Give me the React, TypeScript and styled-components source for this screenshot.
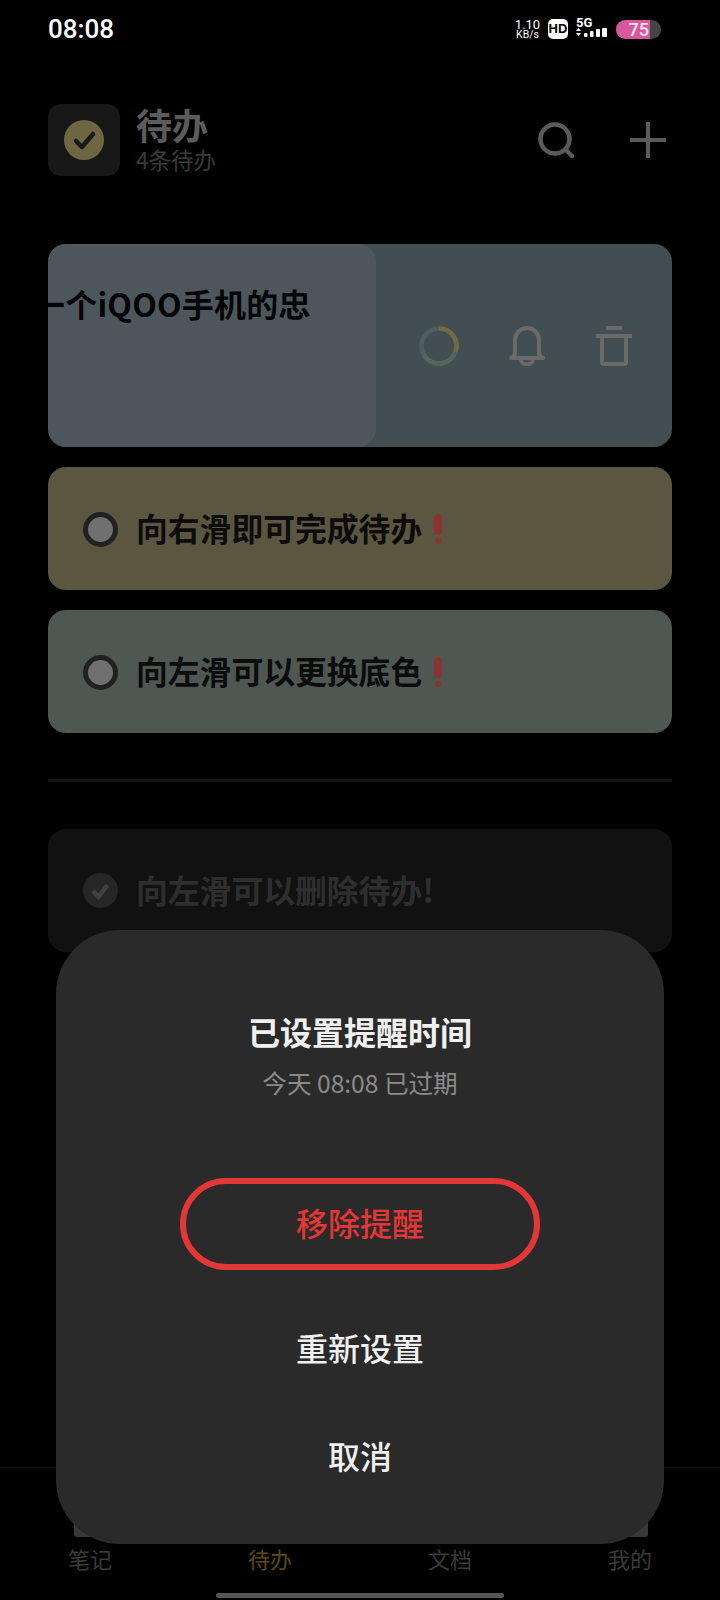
import React from 'react';
import styled, { createGlobalStyle } from 'styled-components';

const FONT = `"Noto Sans CJK SC", "Noto Sans", sans-serif`;

const GlobalStyle = createGlobalStyle`
  html, body {
    margin: 0;
    padding: 0;
    background: #000;
  }
  * {
    box-sizing: border-box;
  }
`;

const Page = styled.div`
  position: relative;
  width: 720px;
  height: 1600px;
  overflow: hidden;
  background: #000;
  font-family: ${FONT};
  display: flex;
  flex-direction: column;
`;

const StatusBar = styled.div`
  height: 58px;
  padding: 0 59px 0 48px;
  display: flex;
  align-items: center;
  justify-content: space-between;
`;

const Time = styled.span`
  font-family: Roboto, sans-serif;
  font-size: 26px;
  font-weight: 500;
  color: #fff;
`;

const StatusIcons = styled.div`
  display: flex;
  align-items: center;
`;

const NetSpeed = styled.div`
  width: 25px;
  margin-right: 8px;
  display: flex;
  flex-direction: column;
  align-items: center;
  font-family: Roboto, sans-serif;
  color: #fff;
`;

const SpeedValue = styled.span`
  font-size: 13px;
  line-height: 11px;
`;

const SpeedUnit = styled.span`
  font-size: 10.5px;
  line-height: 9px;
  white-space: nowrap;
`;

const HdBadge = styled.span`
  width: 20px;
  height: 20px;
  margin-right: 8px;
  border-radius: 5px;
  background: #fff;
  color: #000;
  font-family: "Liberation Sans", sans-serif;
  font-weight: 700;
  font-size: 13px;
  line-height: 20px;
  text-align: center;
`;

const Signal = styled.div`
  width: 32px;
  height: 24px;
  margin-right: 8px;
  position: relative;
`;

const SignalText = styled.span`
  position: absolute;
  left: 0;
  top: 0;
  font-family: Roboto, sans-serif;
  font-weight: 700;
  font-size: 13px;
  line-height: 12px;
  color: #fff;
`;

const Battery = styled.div`
  width: 45px;
  height: 19px;
  border-radius: 10px;
  overflow: hidden;
  background: #444;
  display: flex;
`;

const BatteryLevel = styled.div`
  width: 34px;
  background: #d9579b;
  color: #f4e4ee;
  font-family: Roboto, sans-serif;
  font-weight: 500;
  font-size: 18px;
  line-height: 19px;
  text-align: right;
  padding-right: 1px;
`;

const Header = styled.header`
  margin-top: 46px;
  height: 72px;
  padding: 0 54px 0 48px;
  display: flex;
  align-items: center;
`;

const AppIcon = styled.div`
  width: 72px;
  height: 72px;
  border-radius: 13px;
  background: #181818;
  display: flex;
  align-items: center;
  justify-content: center;
`;

const HeaderText = styled.div`
  margin-left: 16px;
  padding-bottom: 6px;
  flex: 1;
  display: flex;
  flex-direction: column;
`;

const Title = styled.h1`
  margin: 0;
  font-size: 36px;
  line-height: 44px;
  font-weight: 700;
  color: #5c5c5c;
`;

const SubTitle = styled.span`
  font-size: 22.5px;
  line-height: 26px;
  color: #3b3b3b;
`;

const HeaderActions = styled.div`
  display: flex;
  gap: 56px;
`;

const List = styled.div`
  margin-top: 68px;
  padding: 0 48px;
  display: flex;
  flex-direction: column;
`;

const SwipeRow = styled.div`
  height: 203px;
  margin-bottom: 20px;
  border-radius: 18px;
  background: #434e52;
  display: flex;
  align-items: center;
  overflow: hidden;
`;

const SwipeFront = styled.div`
  width: 328px;
  height: 100%;
  flex-shrink: 0;
  border-radius: 18px;
  background: #4d565c;
  overflow: hidden;
  padding-top: 36px;
`;

const SwipeText = styled.div`
  margin-left: -15px;
  font-size: 32px;
  line-height: 46px;
  font-weight: 700;
  letter-spacing: 0.2px;
  color: #050505;
  white-space: nowrap;
`;

const SwipeActions = styled.div`
  flex: 1;
  height: 100%;
  display: flex;
  align-items: center;
  padding: 0 40px 0 43px;
  justify-content: space-between;
`;

const TodoCard = styled.div<{ $bg: string }>`
  height: 123px;
  margin-bottom: 20px;
  padding-left: 35px;
  border-radius: 18px;
  background: ${props => props.$bg};
  display: flex;
  align-items: center;
`;

const Radio = styled.span`
  width: 35px;
  height: 35px;
  margin-top: 2px;
  border-radius: 50%;
  border: 5px solid #212121;
  background: #707070;
`;

const TodoText = styled.span<{ $done?: boolean }>`
  margin-left: 18px;
  padding-bottom: 4px;
  font-size: 31.8px;
  line-height: 44px;
  font-weight: 700;
  color: ${props => (props.$done ? '#2e2e2e' : '#0c0c0c')};
`;

const Mark = styled.span`
  position: relative;
  margin-left: 12px;
  width: 8px;
  height: 30px;
`;

const MarkStem = styled.span`
  position: absolute;
  top: 0;
  left: 0;
  width: 8px;
  height: 21px;
  border-radius: 4px 4px 3px 3px;
  background: #8a3434;
`;

const MarkDot = styled.span`
  position: absolute;
  bottom: 0;
  left: 1px;
  width: 6px;
  height: 6px;
  border-radius: 50%;
  background: #8a3434;
`;

const Divider = styled.div`
  height: 3px;
  margin: 26px 0 47px;
  background: #141414;
`;

const DoneCard = styled(TodoCard)`
  margin-bottom: 0;
`;

const TabBar = styled.nav`
  position: absolute;
  left: 0;
  right: 0;
  bottom: 0;
  height: 133px;
  border-top: 1px solid #111;
  display: grid;
  grid-template-columns: repeat(4, 180px);
  padding-top: 74px;
`;

const TabItem = styled.div<{ $active?: boolean }>`
  text-align: center;
  font-size: 22px;
  line-height: 32px;
  color: ${props => (props.$active ? '#5c4a10' : '#3a3a3a')};
`;

const HomeBar = styled.div`
  position: absolute;
  left: 216px;
  bottom: 2px;
  width: 288px;
  height: 5px;
  border-radius: 3px;
  background: #555;
`;

const TabPeek = styled.span<{ $side: 'left' | 'right' }>`
  position: absolute;
  top: 1520px;
  left: ${props => (props.$side === 'left' ? '74px' : '600px')};
  width: 48px;
  height: 17px;
  border-radius: 3px;
  background: #383838;
`;

const Sheet = styled.div`
  position: absolute;
  left: 56px;
  top: 930px;
  width: 608px;
  height: 614px;
  border-radius: 64px;
  background: #2a2a2a;
  display: flex;
  flex-direction: column;
  align-items: center;
  padding-top: 76px;
`;

const SheetTitle = styled.div`
  font-size: 32px;
  line-height: 50px;
  font-weight: 700;
  color: #f0f0f0;
`;

const SheetSub = styled.div`
  margin-top: 3px;
  font-size: 24.6px;
  line-height: 46px;
  color: #8a8a8a;
`;

const SheetActions = styled.div`
  margin-top: 73px;
  display: flex;
  flex-direction: column;
  align-items: center;
`;

const SheetButton = styled.button<{ $danger?: boolean }>`
  width: 360px;
  height: ${props => (props.$danger ? '92px' : '108px')};
  margin-bottom: ${props => (props.$danger ? '25px' : '0')};
  border-radius: 46px;
  border: ${props => (props.$danger ? '6px solid #e33636' : 'none')};
  background: transparent;
  color: ${props => (props.$danger ? '#e33636' : '#f0f0f0')};
  font-family: inherit;
  font-size: 32px;
  font-weight: 500;
  padding: 0 0 5px;
`;

const BellSvg = styled.svg`
  margin-left: -2px;
`;

const CheckLogo = () => (
  <svg width="40" height="40" viewBox="0 0 40 40">
    <circle cx="20" cy="20" r="20" fill="#6e6640" />
    <path d="M12 21l6 6 11-13" fill="none" stroke="#181818" strokeWidth="4.5" strokeLinecap="round" strokeLinejoin="round" />
  </svg>
);

const SearchIcon = () => (
  <svg width="36" height="36" viewBox="0 0 36 36">
    <circle cx="17" cy="17" r="14.5" fill="none" stroke="#5a5a5a" strokeWidth="4.5" />
    <path d="M28 28l6 6" stroke="#5a5a5a" strokeWidth="4.5" strokeLinecap="round" />
  </svg>
);

const PlusIcon = () => (
  <svg width="36" height="36" viewBox="0 0 36 36">
    <path d="M18 0v36M0 18h36" stroke="#5a5a5a" strokeWidth="4" />
  </svg>
);

const ColorRing = () => (
  <svg width="40" height="40" viewBox="0 0 40 40" fill="none" strokeWidth="4.5">
    <circle cx="20" cy="20" r="17.5" stroke="#4f5d64" />
    <path d="M20 2.5A17.5 17.5 0 0 1 36.5 26" stroke="#6f6b45" />
    <path d="M35.5 28A17.5 17.5 0 0 1 5 29" stroke="#55675a" />
  </svg>
);

const BellIcon = () => (
  <BellSvg width="36" height="40" viewBox="0 0 36 40" fill="none" stroke="#6a6a6a" strokeWidth="4" strokeLinejoin="round" strokeLinecap="round">
    <path d="M2 32c3-1 4-3 4-6V14a12 12 0 0 1 24 0v12c0 3 1 5 4 6z" />
    <path d="M12 33a6 5.5 0 0 0 12 0" />
  </BellSvg>
);

const TrashIcon = () => (
  <svg width="36" height="40" viewBox="0 0 36 40" fill="none" stroke="#6a6a6a" strokeWidth="4">
    <path d="M10 2h16M0 10h36" />
    <path d="M6 10v26a2 2 0 0 0 2 2h20a2 2 0 0 0 2-2V10" />
  </svg>
);

const DoneIcon = () => (
  <svg width="35" height="35" viewBox="0 0 35 35">
    <circle cx="17.5" cy="17.5" r="17.5" fill="#262626" />
    <path d="M10 18l5.5 6 9-12" fill="none" stroke="#404040" strokeWidth="4.5" />
  </svg>
);

const SignalIcon = () => (
  <svg width="32" height="24" viewBox="0 0 32 24" fill="#fff">
    <path d="M0 14l2.5-3 2.5 3zM0 16h5l-2.5 3z" />
    <rect x="8" y="16" width="3.5" height="4" rx="1" />
    <rect x="14" y="14" width="3.5" height="6" rx="1" />
    <rect x="20" y="12" width="4" height="8" rx="1" />
    <rect x="26" y="11" width="5" height="9" rx="1" />
  </svg>
);

const Exclaim = () => (
  <Mark>
    <MarkStem />
    <MarkDot />
  </Mark>
);

const App = () => {
  const tabs = ['笔记', '待办', '文档', '我的'];

  return (
    <Page>
      <GlobalStyle />
      <StatusBar>
        <Time>08:08</Time>
        <StatusIcons>
          <NetSpeed>
            <SpeedValue>1.10</SpeedValue>
            <SpeedUnit>KB/s</SpeedUnit>
          </NetSpeed>
          <HdBadge>HD</HdBadge>
          <Signal>
            <SignalText>5G</SignalText>
            <SignalIcon />
          </Signal>
          <Battery>
            <BatteryLevel>75</BatteryLevel>
          </Battery>
        </StatusIcons>
      </StatusBar>

      <Header>
        <AppIcon>
          <CheckLogo />
        </AppIcon>
        <HeaderText>
          <Title>待办</Title>
          <SubTitle>4条待办</SubTitle>
        </HeaderText>
        <HeaderActions>
          <SearchIcon />
          <PlusIcon />
        </HeaderActions>
      </Header>

      <List>
        <SwipeRow>
          <SwipeFront>
            <SwipeText>一个iQOO手机的忠</SwipeText>
          </SwipeFront>
          <SwipeActions>
            <ColorRing />
            <BellIcon />
            <TrashIcon />
          </SwipeActions>
        </SwipeRow>
        <TodoCard $bg="#5b563f">
          <Radio />
          <TodoText>向右滑即可完成待办</TodoText>
          <Exclaim />
        </TodoCard>
        <TodoCard $bg="#4e5751">
          <Radio />
          <TodoText>向左滑可以更换底色</TodoText>
          <Exclaim />
        </TodoCard>
        <Divider />
        <DoneCard $bg="#111">
          <DoneIcon />
          <TodoText $done>向左滑可以删除待办!</TodoText>
        </DoneCard>
      </List>

      <TabPeek $side="left" />
      <TabPeek $side="right" />
      <TabBar>
        {tabs.map(tab => (
          <TabItem key={tab} $active={tab === '待办'}>
            {tab}
          </TabItem>
        ))}
      </TabBar>
      <HomeBar />

      <Sheet>
        <SheetTitle>已设置提醒时间</SheetTitle>
        <SheetSub>今天 08:08 已过期</SheetSub>
        <SheetActions>
          <SheetButton $danger>移除提醒</SheetButton>
          <SheetButton>重新设置</SheetButton>
          <SheetButton>取消</SheetButton>
        </SheetActions>
      </Sheet>
    </Page>
  );
};

export default App;
